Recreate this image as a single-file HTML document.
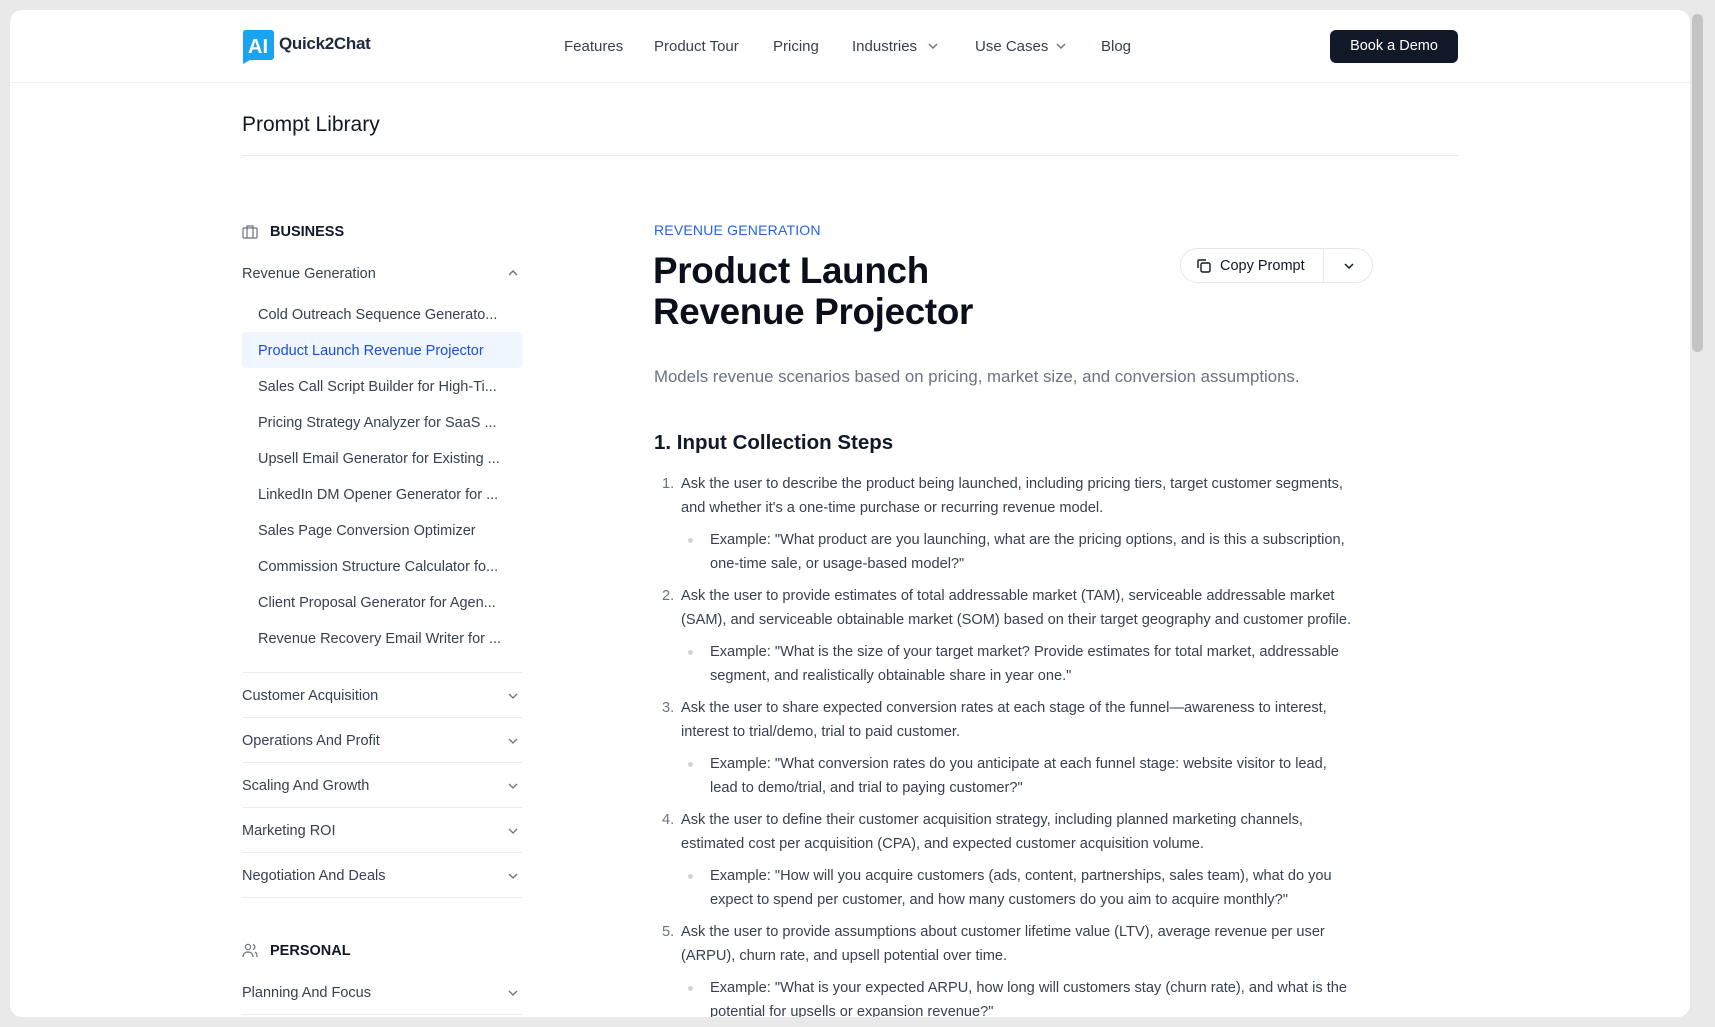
<!DOCTYPE html>
<html><head><meta charset="utf-8"><style>
*{margin:0;padding:0;box-sizing:border-box}
body{width:1715px;height:1027px;background:#e9e9e9;font-family:"Liberation Sans",Arial,sans-serif;position:relative;overflow:hidden;color:#111827}
.win{position:absolute;left:10px;top:10px;width:1680px;height:1007px;background:#fff;border-radius:12px;overflow:hidden}
.sb{position:absolute;left:1692px;top:14px;width:11px;height:338px;background:#c4c4c4;border-radius:6px}
.a{position:absolute;white-space:nowrap}
.nav{font-size:15px;color:#374151;top:28px}
.hb{position:absolute;left:0;top:72px;width:1680px;height:1px;background:#f0f0f0}
.side{font-size:14.5px;color:#374151;line-height:20px}
.line{position:absolute;left:232px;width:280px;height:1px;background:#ececec}
.chev{position:absolute;width:12px;height:8px}
.li{position:absolute;font-size:14.6px;color:#374151;line-height:24px;white-space:nowrap}
.num{position:absolute;font-size:14.6px;color:#6b7280;line-height:24px}
.dot{position:absolute;width:5px;height:5px;border-radius:50%;background:#d1d5db}
</style></head><body>
<div class="win">
<div class="a" style="left:232px;top:20px;width:32px;height:32px">
<svg width="32" height="34" viewBox="0 0 32 34"><path d="M3 0h26a3 3 0 0 1 3 3v24a3 3 0 0 1-3 3H8l-7 4V3a3 3 0 0 1 2-3z" fill="#1aa3f0"/><text x="16" y="23" text-anchor="middle" font-family="Liberation Sans" font-weight="bold" font-size="20" fill="#fff">AI</text></svg></div>
<div class="a" style="left:269px;top:24px;font-size:17px;font-weight:bold;color:#1e293b;letter-spacing:-0.3px">Quick2Chat</div>
<div class="a nav" style="left:554px">Features</div>
<div class="a nav" style="left:644px">Product Tour</div>
<div class="a nav" style="left:763px">Pricing</div>
<div class="a nav" style="left:842px">Industries</div>
<svg class="chev" style="left:917px;top:32px" viewBox="0 0 12 8"><path d="M2 2l4 4 4-4" stroke="#6b7280" stroke-width="1.4" fill="none"/></svg>
<div class="a nav" style="left:965px">Use Cases</div>
<svg class="chev" style="left:1045px;top:32px" viewBox="0 0 12 8"><path d="M2 2l4 4 4-4" stroke="#6b7280" stroke-width="1.4" fill="none"/></svg>
<div class="a nav" style="left:1091px">Blog</div>
<div class="a" style="left:1320px;top:20px;width:128px;height:33px;background:#111827;border-radius:6px;color:#fff;font-size:14.5px;text-align:center;line-height:33px">Book a Demo</div>
<div class="hb"></div>

<div class="a" style="left:232px;top:103px;font-size:21px;color:#111827">Prompt Library</div>
<div class="a" style="left:232px;top:145px;width:1216px;height:1px;background:#e5e7eb"></div>

<svg class="a" style="left:232px;top:215px" width="16" height="14" viewBox="0 0 16 14"><rect x="1" y="3" width="14" height="10" rx="1" stroke="#6b7280" fill="none" stroke-width="1.2"/><path d="M5 3V1h6v2M5 3v10M11 3v10" stroke="#6b7280" fill="none" stroke-width="1.2"/></svg>
<div class="a" style="left:260px;top:214px;font-size:14.5px;font-weight:bold;color:#111827">BUSINESS</div>
<div class="a side" style="left:232px;top:254px">Revenue Generation</div>
<svg class="chev" style="left:497px;top:259px" viewBox="0 0 12 8"><path d="M2 6l4-4 4 4" stroke="#6b7280" stroke-width="1.4" fill="none"/></svg>
<div class="a" style="left:232px;top:322px;width:280px;height:36px;background:#eff6ff;border-radius:4px"></div>
<div class="a side" style="left:248px;top:295px">Cold Outreach Sequence Generato...</div>
<div class="a side" style="left:248px;top:331px;color:#1d4ed8">Product Launch Revenue Projector</div>
<div class="a side" style="left:248px;top:367px">Sales Call Script Builder for High-Ti...</div>
<div class="a side" style="left:248px;top:403px">Pricing Strategy Analyzer for SaaS ...</div>
<div class="a side" style="left:248px;top:439px">Upsell Email Generator for Existing ...</div>
<div class="a side" style="left:248px;top:475px">LinkedIn DM Opener Generator for ...</div>
<div class="a side" style="left:248px;top:511px">Sales Page Conversion Optimizer</div>
<div class="a side" style="left:248px;top:547px">Commission Structure Calculator fo...</div>
<div class="a side" style="left:248px;top:583px">Client Proposal Generator for Agen...</div>
<div class="a side" style="left:248px;top:619px">Revenue Recovery Email Writer for ...</div>

<div class="line" style="top:662px"></div>
<div class="a side" style="left:232px;top:676px">Customer Acquisition</div>
<div class="line" style="top:707px"></div>
<div class="a side" style="left:232px;top:721px">Operations And Profit</div>
<div class="line" style="top:752px"></div>
<div class="a side" style="left:232px;top:766px">Scaling And Growth</div>
<div class="line" style="top:797px"></div>
<div class="a side" style="left:232px;top:811px">Marketing ROI</div>
<div class="line" style="top:842px"></div>
<div class="a side" style="left:232px;top:856px">Negotiation And Deals</div>
<div class="line" style="top:887px"></div>
<svg class="chev" style="left:497px;top:682px" viewBox="0 0 12 8"><path d="M2 2l4 4 4-4" stroke="#6b7280" stroke-width="1.3" fill="none"/></svg>
<svg class="chev" style="left:497px;top:727px" viewBox="0 0 12 8"><path d="M2 2l4 4 4-4" stroke="#6b7280" stroke-width="1.3" fill="none"/></svg>
<svg class="chev" style="left:497px;top:772px" viewBox="0 0 12 8"><path d="M2 2l4 4 4-4" stroke="#6b7280" stroke-width="1.3" fill="none"/></svg>
<svg class="chev" style="left:497px;top:817px" viewBox="0 0 12 8"><path d="M2 2l4 4 4-4" stroke="#6b7280" stroke-width="1.3" fill="none"/></svg>
<svg class="chev" style="left:497px;top:862px" viewBox="0 0 12 8"><path d="M2 2l4 4 4-4" stroke="#6b7280" stroke-width="1.3" fill="none"/></svg>
<svg class="a" style="left:232px;top:933px" width="16" height="15" viewBox="0 0 16 15"><circle cx="6" cy="4" r="2.6" stroke="#6b7280" fill="none" stroke-width="1.2"/><path d="M1 14c0-3 2-5 5-5s5 2 5 5M11 1.5a2.6 2.6 0 0 1 0 5M13 9c1.5.8 2 2.5 2 5" stroke="#6b7280" fill="none" stroke-width="1.2"/></svg>
<div class="a" style="left:260px;top:933px;font-size:14.5px;font-weight:bold;color:#111827">PERSONAL</div>
<div class="a side" style="left:232px;top:973px">Planning And Focus</div>
<svg class="chev" style="left:497px;top:979px" viewBox="0 0 12 8"><path d="M2 2l4 4 4-4" stroke="#6b7280" stroke-width="1.3" fill="none"/></svg>
<div class="line" style="top:1004px"></div>

<div class="a" style="left:644px;top:212px;font-size:14px;color:#2563eb;letter-spacing:0.2px">REVENUE GENERATION</div>
<div class="a" style="left:643px;top:240px;font-size:36.8px;font-weight:bold;line-height:41px;color:#0b0f19;letter-spacing:-0.3px">Product Launch<br>Revenue Projector</div>
<div class="a" style="left:1170px;top:238px;width:193px;height:35px;border:1px solid #e5e7eb;border-radius:18px"></div>
<div class="a" style="left:1313px;top:239px;width:1px;height:33px;background:#e5e7eb"></div>
<svg class="a" style="left:1186px;top:248px" width="16" height="16" viewBox="0 0 16 16"><rect x="5" y="5" width="9" height="9" rx="1.5" stroke="#111827" fill="none" stroke-width="1.4"/><path d="M2 10V3a1 1 0 0 1 1-1h7" stroke="#111827" fill="none" stroke-width="1.4"/></svg>
<div class="a" style="left:1210px;top:248px;font-size:14.5px;color:#111827">Copy Prompt</div>
<svg class="chev" style="left:1333px;top:252px" viewBox="0 0 12 8"><path d="M2 2l4 4 4-4" stroke="#111827" stroke-width="1.5" fill="none"/></svg>

<div class="a" style="left:644px;top:357px;font-size:16.8px;color:#6b7280">Models revenue scenarios based on pricing, market size, and conversion assumptions.</div>
<div class="a" style="left:644px;top:421px;font-size:20.5px;font-weight:bold;color:#111827">1. Input Collection Steps</div>

<div class="num" style="left:652px;top:462px">1.</div>
<div class="li" style="left:671px;top:462px">Ask the user to describe the product being launched, including pricing tiers, target customer segments,<br>and whether it's a one-time purchase or recurring revenue model.</div>
<div class="dot" style="left:678px;top:528px"></div>
<div class="li" style="left:700px;top:518px">Example: "What product are you launching, what are the pricing options, and is this a subscription,<br>one-time sale, or usage-based model?"</div>

<div class="num" style="left:652px;top:574px">2.</div>
<div class="li" style="left:671px;top:574px">Ask the user to provide estimates of total addressable market (TAM), serviceable addressable market<br>(SAM), and serviceable obtainable market (SOM) based on their target geography and customer profile.</div>
<div class="dot" style="left:678px;top:640px"></div>
<div class="li" style="left:700px;top:630px">Example: "What is the size of your target market? Provide estimates for total market, addressable<br>segment, and realistically obtainable share in year one."</div>

<div class="num" style="left:652px;top:686px">3.</div>
<div class="li" style="left:671px;top:686px">Ask the user to share expected conversion rates at each stage of the funnel—awareness to interest,<br>interest to trial/demo, trial to paid customer.</div>
<div class="dot" style="left:678px;top:752px"></div>
<div class="li" style="left:700px;top:742px">Example: "What conversion rates do you anticipate at each funnel stage: website visitor to lead,<br>lead to demo/trial, and trial to paying customer?"</div>

<div class="num" style="left:652px;top:798px">4.</div>
<div class="li" style="left:671px;top:798px">Ask the user to define their customer acquisition strategy, including planned marketing channels,<br>estimated cost per acquisition (CPA), and expected customer acquisition volume.</div>
<div class="dot" style="left:678px;top:864px"></div>
<div class="li" style="left:700px;top:854px">Example: "How will you acquire customers (ads, content, partnerships, sales team), what do you<br>expect to spend per customer, and how many customers do you aim to acquire monthly?"</div>

<div class="num" style="left:652px;top:910px">5.</div>
<div class="li" style="left:671px;top:910px">Ask the user to provide assumptions about customer lifetime value (LTV), average revenue per user<br>(ARPU), churn rate, and upsell potential over time.</div>
<div class="dot" style="left:678px;top:976px"></div>
<div class="li" style="left:700px;top:966px">Example: "What is your expected ARPU, how long will customers stay (churn rate), and what is the<br>potential for upsells or expansion revenue?"</div>
</div>
<div class="sb"></div>
</body></html>
